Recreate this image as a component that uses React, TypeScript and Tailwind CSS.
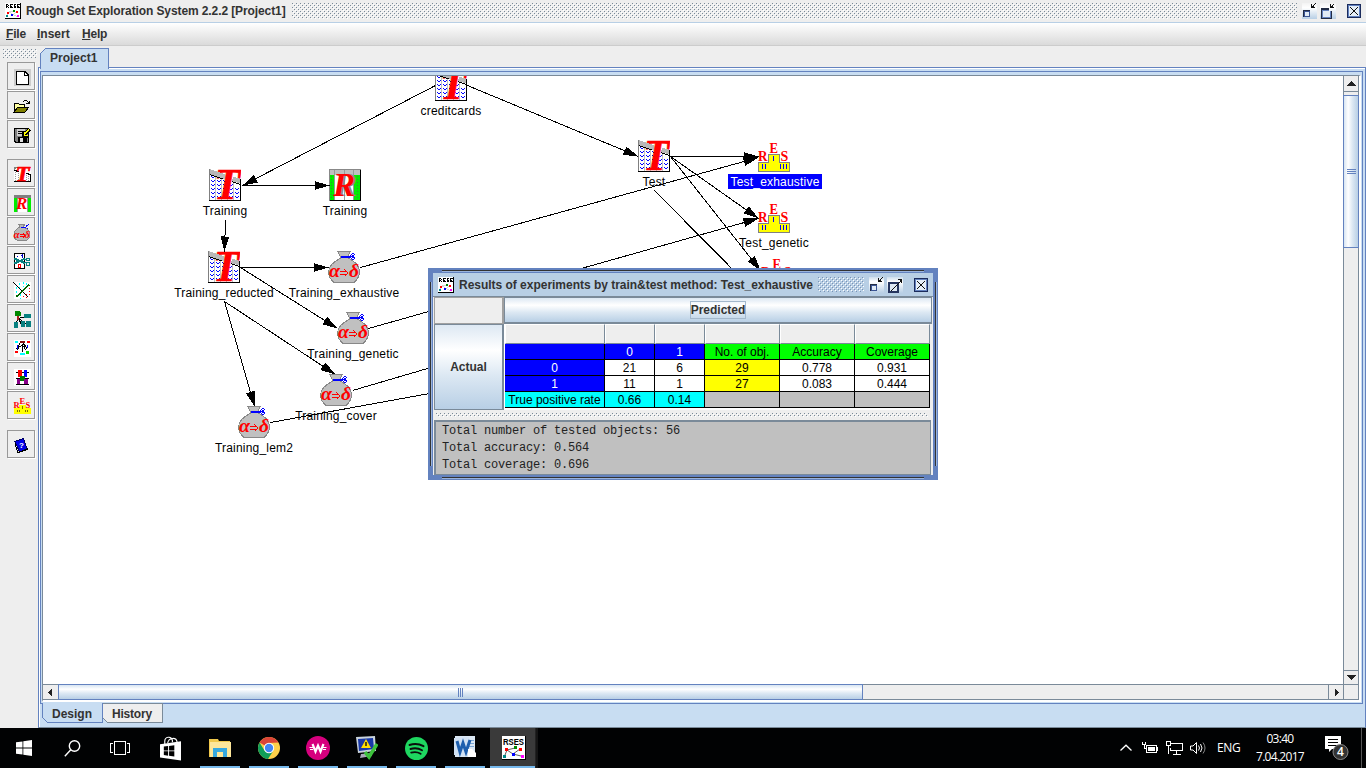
import React from "react";

const sans = "font-['Liberation_Sans',Arial,sans-serif]";

function Dots({ id, className, light = "#ffffff", dark = "#7a8a99" }: { id: string; className: string; light?: string; dark?: string }) {
  return (
    <svg className={className} shapeRendering="crispEdges">
      <defs>
        <pattern id={id} width="4" height="4" patternUnits="userSpaceOnUse">
          <rect x="0" y="0" width="1" height="1" fill={dark} />
          <rect x="2" y="2" width="1" height="1" fill={dark} />
          <rect x="1" y="1" width="1" height="1" fill={light} />
          <rect x="3" y="3" width="1" height="1" fill={light} />
        </pattern>
      </defs>
      <rect width="100%" height="100%" fill={`url(#${id})`} />
    </svg>
  );
}

function RsesLogo({ size = 16 }: { size?: number }) {
  return (
    <svg width={size} height={size} viewBox="0 0 16 16" shapeRendering="crispEdges" className="shrink-0">
      <rect width="16" height="16" fill="#000" />
      <rect x="0" y="0" width="15" height="15" fill="#fff" />
      <path d="M1 1.500h2M1.500 1v4M3.500 2v1M2 3.500h1M3.500 4v1M5 1.500h3M5.500 2v1M5 3.500h2M7.500 4v1M5 4.500h2M9 1.500h2M9.500 1v4M9 3.500h2M9 4.500h2M12 1.500h3M12.500 2v1M12 3.500h2M14.500 4v1M12 4.500h2" stroke="#000" strokeWidth="1" fill="none" />
      <path d="M2 13L4 9L8 8M4 9L9 12L13 14M7 12L12 9" stroke="#bbb" strokeWidth=".6" fill="none" />
      <rect x="2" y="9" width="2" height="2" fill="#f00" />
      <rect x="8" y="7" width="2" height="2" fill="#080" />
      <rect x="11" y="8" width="2" height="2" fill="#f00" />
      <rect x="6" y="11" width="2" height="2" fill="#00f" />
      <rect x="1" y="12" width="2" height="2" fill="#088" />
      <rect x="12" y="12" width="2" height="2" fill="#f0f" />
    </svg>
  );
}

function RsesBig() {
  return (
    <svg width="24" height="24" viewBox="0 0 24 24">
      <rect width="24" height="24" fill="#000" />
      <rect width="23" height="23" fill="#fff" />
      <text x="1" y="9" fontFamily="Liberation Sans" fontWeight="700" fontSize="8.500" textLength="21" lengthAdjust="spacingAndGlyphs">RSES</text>
      <path d="M3 19L5 14L13 12M5 14L11 18L19 20M11 18L18 13" stroke="#333" strokeWidth=".8" fill="none" />
      <rect x="3" y="12" width="3" height="3" fill="#f00" />
      <rect x="12" y="10" width="3" height="3" fill="#080" />
      <rect x="17" y="12" width="3" height="3" fill="#f00" />
      <rect x="10" y="17" width="3" height="3" fill="#00f" />
      <rect x="1" y="19" width="3" height="3" fill="#088" />
      <rect x="19" y="19" width="3" height="3" fill="#f0f" />
    </svg>
  );
}

/* ---------- window buttons ---------- */

function WinButtons({ restored }: { restored: boolean }) {
  return (
    <svg width="60" height="16" viewBox="0 0 60 16" shapeRendering="crispEdges" className="shrink-0">
      <defs>
        <linearGradient id="wb" x1="0" y1="0" x2="0" y2="1">
          <stop offset="0" stopColor="#fff" stopOpacity="0.300" />
          <stop offset=".3" stopColor="#fff" />
          <stop offset="1" stopColor="#b8cfe5" />
        </linearGradient>
      </defs>
      <rect width="15" height="16" fill="url(#wb)" />
      <rect x="2" y="8" width="6" height="6" fill="#dfeaf5" />
      <path d="M1 7.500h7M1.500 7v7" stroke="#222c44" />
      <path d="M2 8.500h6M2.500 8v6M7.500 8v6M2 13.500h6" stroke="#3a5493" />
      <path d="M9.500 1v4M9 4.500h4M10 3.500h2M11 2.500h1M12 1.500h1M13 .5h1" stroke="#111" />
      <rect x="18" width="16" height="16" fill="url(#wb)" />
      {restored ? (
        <>
          <rect x="20" y="8" width="9" height="9" fill="#dfeaf5" />
          <path d="M28.500 1v4M28 4.500h4M29 3.500h2M30 2.500h1M31 1.500h1" stroke="#111" />
          <path d="M27 6H20V15H29V8" fill="none" stroke="#222c44" strokeWidth="2" />
          <path d="M27 7.500H20.500V14.500H28.500V8" fill="none" stroke="#6382bf" />
        </>
      ) : (
        <>
          <rect x="20" y="6" width="9" height="9" fill="#dfeaf5" stroke="#26355f" strokeWidth="2" />
          <path d="M22 13.500h1M23 12.500h1M24 11.500h1M25 10.500h1M26 9.500h1M27 8.500h1M28 7.500h1M29 6.500h1M30 5.500h1M31 4.500h1" stroke="#111" />
          <path d="M29 2.500h4M32.500 2v4M31 3.500h1" stroke="#111" />
        </>
      )}
      <rect x="45.500" y="1.500" width="13" height="13" fill="#dfeaf5" stroke="#1c2c5c" />
      <rect x="46.500" y="2.500" width="11" height="11" fill="#e6eff8" stroke="#6382bf" />
      <path d="M48 4L56 12M56 4L48 12" stroke="#111" strokeWidth="1.300" />
    </svg>
  );
}

/* ---------- node drawings, 32 x 32 ---------- */

function TableIcon() {
  const cols = [2, 8, 14, 20, 26];
  const waves = cols
    .map((x, i) =>
      [8, 12, 16, 20, 24, 28]
        .filter((y) => y > 6 + i * 2.6)
        .map((y) => `M${x} ${y - 0.5}h1M${x + 1} ${y + 0.5}h2M${x + 3} ${y - 0.5}h1`)
        .join("")
    )
    .join("");
  return (
    <>
      <path d="M0 2V32H32V13Z" fill="#fff" />
      <path d="M6.500 7V31M12.500 9V31M18.500 11V31M24.500 12V31" stroke="#c0c0c0" />
      <path d={waves} stroke="#0000ff" fill="none" />
      <text x="5" y="30" fontFamily="Liberation Serif" fontStyle="italic" fontWeight="700" fontSize="44" fill="#f00" stroke="#f00" strokeWidth=".6" textLength="26" lengthAdjust="spacingAndGlyphs">T</text>
      <path d="M0 0L16 5V10L0 5Z" fill="#b8b8b8" />
      <path d="M24 7.500L32 10V15L23 12Z" fill="#b8b8b8" />
      <path d="M0 5.500L14 9.900M23 12.700L32 15.500" stroke="#000" />
      <path d="M.5 0V32" stroke="#808080" />
      <path d="M31.500 10V32M0 31.500H32" stroke="#000" />
    </>
  );
}

function ReductIcon() {
  return (
    <>
      <rect width="32" height="32" fill="#c0c0c0" />
      <rect x="0" y="6" width="32" height="26" fill="#0e0" />
      <rect x="6" y="6" width="18" height="26" fill="#fff" />
      <path d="M5.500 0V32M15.500 0V32M24.500 0V32" stroke="#999" />
      <path d="M2.500 7V31M28.500 7V31" stroke="#3a8a3a" strokeDasharray="1 2" />
      <text x="6" y="27" fontFamily="Liberation Serif" fontStyle="italic" fontWeight="700" fontSize="33" fill="#888">R</text>
      <text x="4" y="27" fontFamily="Liberation Serif" fontStyle="italic" fontWeight="700" fontSize="33" fill="#f00">R</text>
      <path d="M31.500 0V32M0 31.500H32" stroke="#000" />
      <path d="M.5 0V32M0 .5H32" stroke="#888" />
    </>
  );
}

function BagIcon() {
  return (
    <>
      <path d="M10 .5H22L20 5V7C24 9 32 14 31.500 21C31 27 28 30 26 31.500H6C3 29 .5 26 .5 21C.5 14 9 9 13 7L12 5Z" fill="#c0c0c0" stroke="#888" />
      <path d="M13 6H23" stroke="#00f" strokeWidth="2" />
      <path d="M22 4.500h1M23 3.500h1M24 2.500h2M26.500 3v1M24 4.500h2M23 5.500h3M23 7.500h1M24 8.500h2M26.500 6v2M24 6.500h2" stroke="#00f" fill="none" />
      <text x="1" y="26" fontFamily="Liberation Serif" fontStyle="italic" fontWeight="700" fontSize="19" fill="#f00" textLength="11" lengthAdjust="spacingAndGlyphs">α</text>
      <path d="M12 20.500h7M12 23.500h7" stroke="#f00" fill="none" />
      <path d="M16.500 18.500l3.500 3.500l-3.500 3.500" stroke="#f00" fill="none" />
      <text x="21" y="26" fontFamily="Liberation Serif" fontStyle="italic" fontWeight="700" fontSize="18" fill="#f00" textLength="10" lengthAdjust="spacingAndGlyphs">δ</text>
    </>
  );
}

function ResultIcon() {
  return (
    <>
      <path d="M.5 31.500V22.500H10.500V14.500H21.500V22.500H31.500V31.500Z" fill="#ff0" stroke="#808080" />
      <path d="M15.500 16v5M4.500 24v5M7.500 24v5M22.500 24v5M25.500 24v5M28.500 24v5" stroke="#00f" />
      <g fontFamily="Liberation Serif" fontWeight="700" fontSize="14" fill="#f00">
        <text x="0" y="21" textLength="9.500" lengthAdjust="spacingAndGlyphs">R</text>
        <text x="11.500" y="13" textLength="8.500" lengthAdjust="spacingAndGlyphs">E</text>
        <text x="22.500" y="21">S</text>
      </g>
    </>
  );
}

const kinds = { table: TableIcon, reduct: ReductIcon, bag: BagIcon, result: ResultIcon };

type GraphNode = { kind: keyof typeof kinds; x: number; y: number; label: string; selected?: boolean };
const nodes: GraphNode[] = [
  { kind: "table", x: 435, y: 69, label: "creditcards" },
  { kind: "table", x: 209, y: 169, label: "Training" },
  { kind: "reduct", x: 329, y: 169, label: "Training" },
  { kind: "table", x: 208, y: 251, label: "Training_reducted" },
  { kind: "bag", x: 328, y: 251, label: "Training_exhaustive" },
  { kind: "bag", x: 337, y: 312, label: "Training_genetic" },
  { kind: "bag", x: 320, y: 374, label: "Training_cover" },
  { kind: "bag", x: 238, y: 406, label: "Training_lem2" },
  { kind: "table", x: 638, y: 140, label: "Test" },
  { kind: "result", x: 758, y: 140, label: "Test_exhaustive", selected: true },
  { kind: "result", x: 758, y: 201, label: "Test_genetic" },
  { kind: "result", x: 761, y: 256, label: "" },
];

const edges: [number, number, number, number][] = [
  [435, 85, 242, 185],
  [467, 85, 638, 156],
  [241, 185, 329, 185],
  [225, 219, 224, 251],
  [240, 267, 328, 267],
  [240, 267, 337, 328],
  [224, 301, 335, 374],
  [224, 301, 254, 406],
  [670, 156, 758, 156],
  [670, 156, 758, 218],
  [670, 156, 760, 270],
  [654, 190, 760, 297],
  [360, 267, 758, 157],
  [368, 328, 758, 218],
  [352, 390, 758, 271],
  [270, 422, 758, 333],
];

function Edge({ e }: { e: [number, number, number, number] }) {
  const [x1, y1, x2, y2] = e;
  const a = (Math.atan2(y2 - y1, x2 - x1) * 180) / Math.PI;
  return (
    <>
      <line x1={x1 + 0.5} y1={y1 + 0.5} x2={x2 + 0.5} y2={y2 + 0.5} stroke="#000" />
      <path d="M0 0L-15 -4.500V4.500Z" fill="#000" transform={`translate(${x2 + 0.5} ${y2 + 0.5}) rotate(${a})`} />
    </>
  );
}

function Canvas() {
  return (
    <div className="relative h-[608px] w-[1300px] shrink-0 overflow-hidden bg-white">
      {nodes.map((n, i) => {
        const Icon = kinds[n.kind];
        return (
          <div key={i} className="absolute flex w-8 flex-col items-center" style={{ left: n.x - 43, top: n.y - 76 }}>
            <svg width="32" height="32" viewBox="0 0 32 32" className="shrink-0" shapeRendering="crispEdges">
              <Icon />
            </svg>
            <span
              className={
                n.selected
                  ? "mt-[2px] ml-[2px] h-[15px] bg-[#0000ff] px-[2px] text-[12px] leading-[17px] tracking-[0.2px] whitespace-nowrap text-white"
                  : "mt-[2px] h-[15px] px-[2px] text-[12px] leading-[17px] tracking-[0.2px] whitespace-nowrap text-black"
              }
            >
              {n.label}
            </span>
          </div>
        );
      })}
      <svg className="absolute inset-0 h-full w-full" viewBox="43 76 1300 608" shapeRendering="crispEdges">
        {edges.map((e, i) => (
          <Edge key={i} e={e} />
        ))}
      </svg>
      <ResultsDialog />
    </div>
  );
}

/* ---------- results dialog ---------- */

const grid = "grid grid-cols-[100px_50px_50px_75px_75px_75px]";
const BLUE = "bg-[#0000ff] text-white";
const WHITE = "bg-white text-black";
const GREEN = "bg-[#00ff00] text-black";
const YELLOW = "bg-[#ffff00] text-black";
const CYAN = "bg-[#00ffff] text-black";
const GRAY = "bg-[#c0c0c0] text-black";
const rows: [string, string][][] = [
  [["", BLUE], ["0", BLUE], ["1", BLUE], ["No. of obj.", GREEN], ["Accuracy", GREEN], ["Coverage", GREEN]],
  [["0", BLUE], ["21", WHITE], ["6", WHITE], ["29", YELLOW], ["0.778", WHITE], ["0.931", WHITE]],
  [["1", BLUE], ["11", WHITE], ["1", WHITE], ["27", YELLOW], ["0.083", WHITE], ["0.444", WHITE]],
  [["True positive rate", CYAN], ["0.66", CYAN], ["0.14", CYAN], ["", GRAY], ["", GRAY], ["", GRAY]],
];

function ResultsDialog() {
  return (
    <div className="absolute top-[192px] left-[385px] flex h-[212px] w-[510px] flex-col bg-[#6382bf] p-[5px]">
      <div className="pointer-events-none absolute top-[2px] right-[14px] left-[14px] h-[2px] border-t border-[#333] bg-[#9ab4dd]" />
      <div className="pointer-events-none absolute right-[14px] bottom-[1px] left-[14px] h-[2px] border-t border-[#333] bg-[#9ab4dd]" />
      <div className="pointer-events-none absolute top-[14px] bottom-[14px] left-[2px] w-[2px] border-l border-[#333] bg-[#9ab4dd]" />
      <div className="pointer-events-none absolute top-[14px] right-[1px] bottom-[14px] w-[2px] border-l border-[#333] bg-[#9ab4dd]" />
      <div className="flex h-[23px] shrink-0 items-center bg-[#b8cfe5] pl-[5px]">
        <RsesLogo />
        <span className="ml-[5px] w-[359px] text-[12px] font-bold tracking-[-0.02px] whitespace-nowrap text-[#333]">
          Results of experiments by train&amp;test method: Test_exhaustive
        </span>
        <Dots id="d-dlg" className="h-[15px] w-[46px]" dark="#7a93b5" />
        <span className="ml-[5px]">
          <WinButtons restored={false} />
        </span>
      </div>
      <div className="flex h-[179px] flex-col border-t border-[#7a8a99] bg-[#eeeeee] pr-px pl-px">
        <div className="flex h-[27px] shrink-0">
          <div className="w-[70px] border border-r-2 border-[#a0a0a0] bg-[#eeeeee]" />
          <div className="flex flex-1 items-center justify-center border border-b-2 border-[#7a8a99] bg-[linear-gradient(to_bottom,#dde8f3_0%,#ffffff_30%,#dce8f3_60%,#b8cfe5_100%)]">
            <span className="border border-[#a3b8cc] text-[12px] leading-[16px] font-bold text-[#333]">Predicted</span>
          </div>
        </div>
        <div className="flex h-[86px] shrink-0">
          <div className="flex w-[70px] items-center justify-center border border-r-2 border-[#7a8a99] bg-[linear-gradient(to_bottom,#dde8f3_0%,#ffffff_30%,#dce8f3_60%,#b8cfe5_100%)] text-[12px] font-bold text-[#333]">
            Actual
          </div>
          <div className="flex w-[426px] flex-col bg-white pl-px">
            <div className={`${grid} h-[20px]`}>
              {rows[0].map((_, i) => (
                <div key={i} className="border-t border-r border-b border-l border-t-white border-r-[#7a8a99] border-b-[#7a8a99] border-l-white bg-[#eeeeee]" />
              ))}
            </div>
            {rows.map((r, i) => (
              <div key={i} className={grid}>
                {r.map(([t, c], j) => (
                  <div key={j} className={`${c} h-[16px] border-r border-b border-black text-center text-[12px] leading-[16px] whitespace-nowrap`}>
                    {t}
                  </div>
                ))}
              </div>
            ))}
          </div>
        </div>
        <div className="flex h-[10px] shrink-0 items-center pl-[2px]">
          <Dots id="d-split" className="h-[4px] w-[492px]" />
        </div>
        <div className="mr-px mb-[2px] flex flex-1 flex-col border border-t-2 border-l-2 border-[#7a8a99] bg-[#c0c0c0] pt-px pl-[6px] font-['Liberation_Mono','Courier_New',monospace] text-[12px] leading-[17px] tracking-[-0.2px] text-[#222]">
          <div>Total number of tested objects: 56</div>
          <div>Total accuracy: 0.564</div>
          <div>Total coverage: 0.696</div>
        </div>
      </div>
    </div>
  );
}

/* ---------- toolbar ---------- */

function Tool({ children, gap }: { children: React.ReactNode; gap?: boolean }) {
  return (
    <div
      className={
        gap
          ? "mt-[10px] mb-px flex h-[28px] w-[28px] shrink-0 items-center justify-center border border-[#999] bg-[#eeeeee] shadow-[1px_1px_0_#fff]"
          : "mb-px flex h-[28px] w-[28px] shrink-0 items-center justify-center border border-[#999] bg-[#eeeeee] shadow-[1px_1px_0_#fff]"
      }
    >
      {children}
    </div>
  );
}

function I16({ children }: { children: React.ReactNode }) {
  return (
    <svg width="17" height="17" viewBox="0 0 17 17" shapeRendering="crispEdges" className="shrink-0 translate-x-[0.5px] translate-y-[0.5px] overflow-visible">
      {children}
    </svg>
  );
}

function Toolbar() {
  return (
    <div className="flex w-[38px] shrink-0 flex-col items-start pt-[3px] pl-[7px]">
      <Dots id="d-tool" className="mb-[4px] -ml-[4px] h-[9px] w-[34px] shrink-0" />
      <Tool>
        <I16>
          <rect width="17" height="17" fill="#ccc" />
          <path d="M2.500 2.500H11L14.500 6V15.500H2.500Z" fill="#fff" stroke="#000" />
          <path d="M10.500 3v3.500H14" stroke="#000" fill="none" />
        </I16>
      </Tool>
      <Tool>
        <I16>
          <path d="M.5 14.500V5.500H4.500L5.500 6.500H10.500V10" fill="#ffffa0" stroke="#000" />
          <path d="M.5 14.500L4.500 9.500H15.500L11.500 14.500Z" fill="#808000" stroke="#000" />
          <path d="M9 3.500h1M10 2.500h3M13 3.500h1M14 4.500h1M12 5.500h3M15.500 3v3" fill="none" stroke="#000" />
        </I16>
      </Tool>
      <Tool>
        <I16>
          <path d="M.5 1.500H14.500V15.500H2L.5 14Z" fill="#808080" stroke="#000" />
          <rect x="3" y="2" width="8" height="7" fill="#ccc" />
          <path d="M4 4.500h6M4 6.500h6" stroke="#000" />
          <rect x="4" y="10" width="9" height="5" fill="#000" />
          <rect x="6" y="11" width="3" height="4" fill="#ddd" />
          <path d="M16 3L10 9M10 4.500v5h5" stroke="#000" strokeWidth="3" fill="none" />
          <path d="M15.500 3L11 7.500M10.500 5v3.500h4" stroke="#ff0" fill="none" />
        </I16>
      </Tool>
      <Tool gap>
        <I16>
          <rect y="1" width="17" height="15" fill="#fff" />
          <path d="M0 1h5L0 5ZM0 1H17V2H0Z" fill="#808080" />
          <path d="M0 4.500h3M2 5.500h3M12 7.500h3M14 8.500h3M0 15.500H17M16.500 8V16" stroke="#000" />
          <path d="M1.500 6v9M4.500 7v7M12.500 9v6M14.500 10v5" stroke="#999" strokeDasharray="1 1" />
          <text x="2" y="15" fontFamily="Liberation Serif" fontStyle="italic" fontWeight="700" fontSize="20" fill="#f00" stroke="#f00" strokeWidth=".6" textLength="14" lengthAdjust="spacingAndGlyphs">T</text>
        </I16>
      </Tool>
      <Tool>
        <I16>
          <rect width="17" height="17" fill="#fff" />
          <rect width="17" height="3" fill="#808080" />
          <rect y="3" width="3" height="14" fill="#0e0" />
          <rect x="14" y="3" width="3" height="14" fill="#0e0" />
          <path d="M3.500 3v14M13.500 3v14" stroke="#999" />
          <text x="2.500" y="14" fontFamily="Liberation Serif" fontStyle="italic" fontWeight="700" fontSize="17" fill="#f00">R</text>
        </I16>
      </Tool>
      <Tool>
        <I16>
          <path d="M5 .5H11L10 3.500C14 5 16.500 8 16.500 11.500C16.500 14 14.500 16.500 13 16.500H4C2 16.500 .5 14 .5 11.500C.5 8 3 5 6.500 3.500Z" fill="#b8b8b8" stroke="#888" />
          <path d="M7 3.500h5M12 1.500h2M12 2.500h1M13 4.500h1M14.500 .5v1" stroke="#00f" />
          <g fontFamily="Liberation Serif" fontStyle="italic" fontWeight="700" fill="#f00">
            <text x="0" y="14" fontSize="11">α</text>
            <text x="11" y="14" fontSize="10.500">δ</text>
          </g>
          <path d="M6 10.500h5M6 12.500h5M9.500 9v1M10.500 11v1M9.500 13v1" stroke="#f00" />
        </I16>
      </Tool>
      <Tool>
        <I16>
          <rect x=".5" y=".5" width="10" height="15" fill="#fff" stroke="#000" />
          <path d="M8.500 1v4M7 2.500h2M3 3.500h1" stroke="#00c" />
          <rect x="4.500" y="11.500" width="2" height="3" fill="none" stroke="#f00" />
          <path d="M1 6L12 11M1 11L12 6" stroke="#088080" strokeWidth="2" />
          <path d="M12.500 7.500h3v-2h-3ZM12.500 9.500h3v3h-3Z" stroke="#088080" fill="none" />
        </I16>
      </Tool>
      <Tool>
        <I16>
          <rect width="17" height="17" fill="#fff" />
          <path d="M5.500 1v5M9.500 0v5M2.500 5v7M6.500 12v5M12.500 1v2" stroke="#0ff" strokeDasharray="2 2" />
          <path d="M15.500 6v9M12.500 12v5M9.500 14v2" stroke="#f00" strokeDasharray="1 2" />
          <path d="M0 1L15 16" stroke="#000" />
          <path d="M3 15L16 3" stroke="#060" strokeWidth="1.500" />
        </I16>
      </Tool>
      <Tool>
        <I16>
          <path d="M4 8L14 6M4 8L3 14M5 8L8 14M5 8L14 14" stroke="#000" />
          <path d="M4 5v4" stroke="#a22" strokeWidth="2" />
          <path d="M2 0h4l1 2v3H1V2Z" fill="#080" />
          <path d="M10 3h7v4h-7ZM0 11h4v6H0ZM7 10h4v6H7ZM12 10h5v6h-5Z" fill="#088080" />
        </I16>
      </Tool>
      <Tool>
        <I16>
          <rect width="17" height="17" fill="#fff" />
          <path d="M4 11L6 4M12 11L10 4M6 5l-3 5M8.500 4v8M11 5l3 5M5 8l3 -2l3 2" stroke="#000" fill="none" />
          <path d="M6 1h5v2H6Z" fill="#811" />
          <path d="M1 2.500h3M6 14.500h5" stroke="#0ff" strokeWidth="2" />
          <path d="M13 2.500h3M1 12.500h3" stroke="#f00" strokeWidth="2" />
          <path d="M3.500 5v4M13.500 5v3" stroke="#00f" />
          <rect x="12" y="11" width="3" height="3" fill="#0d0" />
        </I16>
      </Tool>
      <Tool>
        <I16>
          <rect width="17" height="17" fill="#fff" />
          <path d="M2 3.500h13M2 9.500h13M2 15.500h13" stroke="#000" />
          <rect x="4" y="1" width="4" height="7" fill="#f00" />
          <rect x="10" y="1" width="3" height="7" fill="#00f" />
          <rect x="6" y="7" width="5" height="5" fill="#070" />
          <rect x="3" y="10" width="3" height="5" fill="#808" />
          <rect x="10" y="10" width="4" height="5" fill="#808" />
        </I16>
      </Tool>
      <Tool>
        <I16>
          <path d="M0 10H5V7H12V10H17V16H0Z" fill="#ff0" />
          <path d="M8.500 8v3M3.500 12v2M5.500 12v2M11.500 12v2M13.500 12v2" stroke="#807000" />
          <g fontFamily="Liberation Serif" fontWeight="700" fontSize="8.500" fill="#f00">
            <text x="0" y="10">R</text>
            <text x="6" y="6">E</text>
            <text x="12" y="10">S</text>
          </g>
        </I16>
      </Tool>
      <Tool gap>
        <I16>
          <path d="M1.500 5L10 2L13.500 12L6 15.500Z" fill="#0000e8" stroke="#000060" />
          <path d="M1.500 6v2l3 8l9 -3v-2" stroke="#000" fill="none" />
          <text x="5.500" y="11" fontSize="8" fontWeight="700" fill="#fff" fontFamily="Liberation Sans">?</text>
        </I16>
      </Tool>
    </div>
  );
}

/* ---------- scroll bars ---------- */

function Arrow({ d }: { d: string }) {
  return (
    <svg width="9" height="9" viewBox="0 0 9 9" shapeRendering="crispEdges">
      <path d={d} fill="#222" />
    </svg>
  );
}

function VScroll() {
  return (
    <div className="flex h-[609px] w-[16px] shrink-0 flex-col border-x border-[#7a8a99] bg-[#eeeeee]">
      <div className="flex h-[16px] items-center justify-center border-b border-[#7a8a99]"><Arrow d="M0 7L4.500 2L9 7Z" /></div>
      <div className="mt-[3px] -ml-px flex h-[153px] w-[16px] flex-col items-center justify-center gap-px border border-[#6382bf] bg-[linear-gradient(to_right,#d8e5f2_0%,#ffffff_30%,#dce8f3_60%,#b8cfe5_100%)]">
        <div className="h-px w-[9px] bg-[#6382bf]" />
        <div className="h-px w-[9px] bg-[#6382bf]" />
        <div className="h-px w-[9px] bg-[#6382bf]" />
      </div>
      <div className="flex-1" />
      <div className="flex h-[15px] items-center justify-center border-t border-[#7a8a99] pb-[3px]"><Arrow d="M0 3L4.500 8L9 3Z" /></div>
    </div>
  );
}

function HScroll() {
  return (
    <div className="flex h-[16px] w-[1316px] border-y border-r border-[#7a8a99] bg-[#eeeeee]">
      <div className="flex w-[15px] items-center justify-center"><Arrow d="M6 0L2 4.500L6 9Z" /></div>
      <div className="-my-px flex w-[805px] items-center justify-center gap-px border border-[#6382bf] bg-[linear-gradient(to_bottom,#d8e5f2_0%,#ffffff_30%,#dce8f3_60%,#b8cfe5_100%)]">
        <div className="h-[9px] w-px bg-[#6382bf]" />
        <div className="h-[9px] w-px bg-[#6382bf]" />
        <div className="h-[9px] w-px bg-[#6382bf]" />
      </div>
      <div className="flex-1" />
      <div className="flex w-[16px] items-center justify-center border-x border-[#7a8a99]"><Arrow d="M3 0L7 4.500L3 9Z" /></div>
      <div className="w-[14px]" />
    </div>
  );
}

/* ---------- task bar ---------- */

function TaskItem({ w, running, active, children }: { w: string; running?: boolean; active?: boolean; children: React.ReactNode }) {
  return (
    <div className={`${w} relative flex h-[40px] shrink-0 items-center justify-center ${active ? "bg-[#3a3a3a]" : ""}`}>
      {children}
      {running && <div className={active ? "absolute bottom-0 left-0 h-[2px] w-full bg-[#76b9ed]" : "absolute bottom-0 left-[4px] h-[2px] w-[40px] bg-[#76b9ed]"} />}
    </div>
  );
}

function Taskbar() {
  return (
    <div className="flex h-[40px] w-full items-center bg-[#010203] font-['Open_Sans','Noto_Sans',sans-serif] text-white">
      <TaskItem w="w-[48px]">
        <svg width="16" height="16" viewBox="0 0 16 16" fill="#fff"><path d="M0 2.300L6.500 1.400V7.500H0ZM7.300 1.300L16 0V7.500H7.300ZM0 8.400H6.500V14.600L0 13.700ZM7.300 8.400H16V16L7.300 14.700Z" /></svg>
      </TaskItem>
      <TaskItem w="w-[48px]">
        <svg width="17" height="17" viewBox="0 0 17 17" fill="none" stroke="#fff" strokeWidth="1.400"><circle cx="10.500" cy="6" r="5.200" /><path d="M6.800 9.700L.8 16.200" /></svg>
      </TaskItem>
      <TaskItem w="w-[48px]">
        <svg width="20" height="16" viewBox="0 0 20 16" fill="none" stroke="#fff" shapeRendering="crispEdges"><rect x="4.500" y="1.500" width="11" height="13" /><path d="M3 3.500H.5V12.500H3M17 3.500H19.500V12.500H17" /></svg>
      </TaskItem>
      <TaskItem w="w-[52px]">
        <svg className="ml-[1px]" width="21" height="25" viewBox="0 0 22 25"><path d="M0 8L22 5V25L0 22Z" fill="#fff" /><path d="M5 8V5C5 0 12 -1 13 4V6M8 7C9 1 17 0 18 6" stroke="#fff" fill="none" strokeWidth="1.200" /><path d="M4 10.500L8.500 10V14.500H4ZM9.500 9.800L15 9V14.500H9.500ZM4 15.500H8.500V20L4 19.400ZM9.500 15.500H15V21L9.500 20.200Z" fill="#000" /></svg>
      </TaskItem>
      <TaskItem w="w-[49px]" running>
        <svg className="-ml-[2px]" width="22" height="20" viewBox="0 0 22 20"><path d="M0 1H9L10 3H21V19H0Z" fill="#f0c84c" /><path d="M1 4H22V19H1Z" fill="#fde69a" /><path d="M4 19V10H18V19H14V14H8V19Z" fill="#35a8e0" /></svg>
      </TaskItem>
      <TaskItem w="w-[49px]" running>
        <svg className="-ml-[2px]" width="22" height="22" viewBox="0 0 22 22"><circle cx="11" cy="11" r="11" fill="#fdd04a" /><path d="M11 11L1.500 5.500A11 11 0 0 1 20.500 5.500L11 6Z" fill="#db4437" /><path d="M1.500 5.500A11 11 0 0 0 10 22L15.500 13.500L11 15.500L6.500 13.500Z" fill="#0f9d58" /><circle cx="11" cy="11" r="5.200" fill="#fff" /><circle cx="11" cy="11" r="4.200" fill="#4285f4" /></svg>
      </TaskItem>
      <TaskItem w="w-[49px]" running>
        <svg className="-ml-[2px]" width="24" height="24" viewBox="0 0 24 24"><circle cx="12" cy="12" r="12" fill="#d6007e" /><path d="M6.500 8L9.500 15.500L12 9.500L14.500 15.500L17.500 8" fill="none" stroke="#fff" strokeWidth="2.200" /><path d="M3.500 11.500H7M17 11.500H20.500M4 13.500H7M17 13.500H20" stroke="#fff" /></svg>
      </TaskItem>
      <TaskItem w="w-[49px]" running>
        <svg className="-ml-[2px]" width="22" height="24" viewBox="0 0 22 24"><path d="M0 1L19 0L20 15L2 17Z" fill="#c9d3dc" /><path d="M2 3L17 2L18 13L3 15Z" fill="#1838a8" /><path d="M10 3L15 12H5Z" fill="#fd0" /><path d="M10 6V10" stroke="#000" strokeWidth="1.300" /><path d="M5 18L16 17V20L4 22Z" fill="#aab" /><path d="M9 16L13 21L21 8" fill="none" stroke="#3cc23c" strokeWidth="3.500" /></svg>
      </TaskItem>
      <TaskItem w="w-[49px]" running>
        <svg className="-ml-[1px]" width="23" height="23" viewBox="0 0 23 23"><circle cx="11.500" cy="11.500" r="11.500" fill="#1ed760" /><path d="M4.500 8C9 6.500 14.500 7 18.500 9.200M5.500 12C9.500 10.800 13.500 11.200 17 13.200M6.200 15.600C9.500 14.700 12.800 15 15.600 16.700" fill="none" stroke="#0a0f0c" strokeWidth="1.900" strokeLinecap="round" /></svg>
      </TaskItem>
      <TaskItem w="w-[49px]" running>
        <svg className="-mt-[2px] -ml-[2px]" width="22" height="23" viewBox="0 0 22 23"><path d="M1 0H21V21H1Z" fill="#dbe8f5" /><path d="M0 2L15 1V20L0 19Z" fill="#d2e2f4" /><path d="M15 4.500h5M15 7.500h5M15 10.500h5" stroke="#7aa6d8" /><path d="M3 5L6 16L9 7L12 16L16 4" fill="none" stroke="#1e5fae" strokeWidth="3" /><path d="M14 13h4l4 4v4h-8Z" fill="#fff" /></svg>
      </TaskItem>
      <TaskItem w="w-[45px]" running active>
        <span className="ml-[2px]"><RsesBig /></span>
      </TaskItem>
      <div className="h-full w-[3px] border-l border-[#222] bg-[#151515]" />
      <div className="flex-1" />
      <svg width="12" height="8" viewBox="0 0 12 8" fill="none" stroke="#fff" strokeWidth="1.300"><path d="M.5 6.500L6 1.200L11.500 6.500" /></svg>
      <svg className="ml-[10px]" width="17" height="14" viewBox="0 0 17 14" shapeRendering="crispEdges"><path d="M4.500 4.500H14.500V11.500H4.500ZM15.500 6v4" fill="none" stroke="#fff" /><rect x="6" y="6" width="7" height="4" fill="#fff" /><path d="M.5 1v3M3.500 1v3M0 3.500h4M2 4v3M2 7.500h2" stroke="#fff" fill="none" /></svg>
      <svg className="ml-[7px]" width="17" height="14" viewBox="0 0 17 14" shapeRendering="crispEdges" fill="none" stroke="#fff"><path d="M5 2.500H16.500V9.500H4.500V7M10.500 10v3M7 13.500h8M.5 .5h4v4h-4ZM2.500 5v8" /></svg>
      <svg className="ml-[7px]" width="17" height="14" viewBox="0 0 17 14" fill="none" stroke="#fff"><path d="M.5 5H3L6.500 1.500V12.500L3 9H.5Z" /><path d="M8.500 4.500Q10.500 7 8.500 9.500M10.500 3Q13.500 7 10.500 11" /><path d="M13 1.500Q17 7 13 12.500" stroke="#888" /></svg>
      <span className="ml-[10px] w-[24px] text-[12px] tracking-[-0.3px]">ENG</span>
      <div className="ml-[14px] flex w-[50px] flex-col items-center text-[12px] leading-[18px] tracking-[-0.7px] whitespace-nowrap">
        <span>03:40</span>
        <span>7.04.2017</span>
      </div>
      <div className="relative ml-[20px] h-[26px] w-[24px]">
        <svg width="24" height="26" viewBox="0 0 24 26"><path d="M0 1H16V14H7L4 17V14H0Z" fill="#fff" /><path d="M3 4.500H13M3 7.500H13M3 10.500H13" stroke="#000" /><circle cx="15.500" cy="17" r="7.500" fill="#333" stroke="#888" /></svg>
        <span className="absolute top-[9px] left-[12px] text-[12px] leading-[16px] font-semibold">4</span>
      </div>
      <div className="ml-[12px] h-full w-[5px] border-l border-[#555]" />
    </div>
  );
}

/* ---------- page ---------- */

export default function App() {
  return (
    <div className={`${sans} flex h-[768px] w-[1366px] flex-col overflow-hidden bg-[#eeeeee] text-[#333]`}>
      <div className="flex h-[23px] shrink-0 items-center border-b border-[#b8cfe5] pl-[5px]">
        <RsesLogo />
        <span className="ml-[5px] w-[266px] text-[12px] font-bold tracking-[-0.1px] whitespace-nowrap">Rough Set Exploration System 2.2.2 [Project1]</span>
        <Dots id="d-title" className="h-[16px] w-[1005px]" />
        <span className="ml-[5px]">
          <WinButtons restored />
        </span>
      </div>
      <div className="flex h-[23px] shrink-0 items-center border-b border-[#cccccc] bg-gradient-to-b from-white to-[#dadada] pl-[6px] text-[12px] font-bold tracking-[-0.2px]">
        <span className="w-[31px]"><u>F</u>ile</span>
        <span className="w-[45px] tracking-[0px]"><u>I</u>nsert</span>
        <span><u>H</u>elp</span>
      </div>
      <div className="flex h-[682px] shrink-0">
        <Toolbar />
        <div className="flex flex-1 flex-col">
          <div className="relative z-10 ml-[2px] h-[21px] w-[69px]">
            <svg className="absolute inset-0" width="69" height="23" viewBox="0 0 69 23" shapeRendering="crispEdges">
              <path d="M0.500 23V7.500L5.500 2.500H68.500V23" fill="#c8ddf2" stroke="#6382bf" />
            </svg>
            <span className="absolute top-[4px] left-[10px] text-[12px] leading-[16px] font-bold">Project1</span>
          </div>
          <div className="flex h-[661px] flex-col border border-[#6382bf] border-b-[#7a8a99] bg-[#c8ddf2] pt-[3px] pr-[2px] pl-px shadow-[inset_1px_1px_0_#fff]">
            <div className="flex h-[633px] flex-col border border-[#6382bf] bg-[#c8ddf2] pt-[3px] pl-px">
              <div className="flex w-[1319px] shrink-0 flex-col border-t border-l border-[#7a8a99] border-r-2 border-b-2 border-r-white border-b-white">
                <div className="flex h-[608px]">
                  <Canvas />
                  <VScroll />
                </div>
                <HScroll />
              </div>
            </div>
            <div className="-mt-px flex pl-[2px] text-[12px] font-bold">
              <div className="relative h-[20px] w-[61px]">
                <svg className="absolute inset-0" width="61" height="20" viewBox="0 0 61 20" shapeRendering="crispEdges"><path d="M.5 0V14.500L5.500 19.500H60.500V0" fill="#c8ddf2" stroke="#6382bf" /></svg>
                <span className="absolute top-[3px] left-[10px] leading-[16px]">Design</span>
              </div>
              <div className="relative h-[20px] w-[60px]">
                <svg className="absolute inset-0" width="60" height="20" viewBox="0 0 60 20" shapeRendering="crispEdges"><path d="M-.5 .5V14.500L4.500 19.500H59.500V.5Z" fill="#eee" stroke="#7a8a99" /></svg>
                <span className="absolute top-[3px] left-[9px] leading-[16px] tracking-[-0.2px]">History</span>
              </div>
            </div>
          </div>
        </div>
      </div>
      <Taskbar />
    </div>
  );
}
